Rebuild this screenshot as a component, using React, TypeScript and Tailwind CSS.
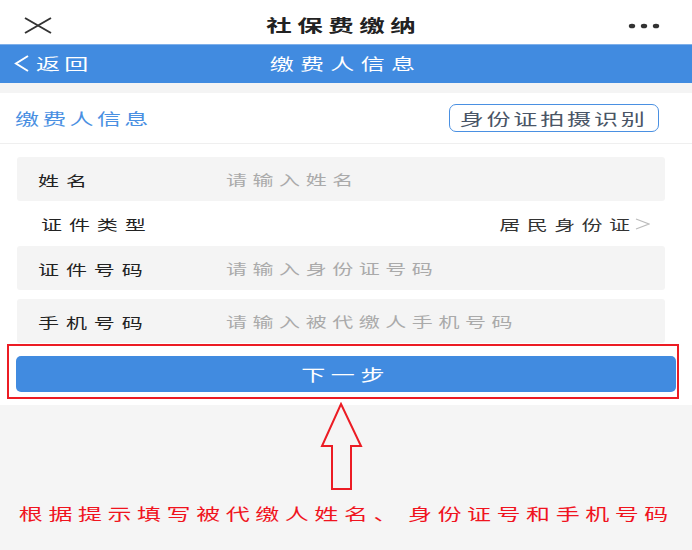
import type { ReactNode } from 'react';

// the screenshot is stretched sideways, so text is widened with scale-x
const Wide = ({ children, className = '' }: { children: ReactNode; className?: string }) => (
  <span className={`inline-block scale-x-[1.5] leading-none whitespace-nowrap ${className}`}>{children}</span>
);

const CloseIcon = () => (
  <svg width="28" height="17" viewBox="0 0 28 17" fill="none">
    <path d="M1 1 L27 16 M27 1 L1 16" stroke="#333" strokeWidth="2" />
  </svg>
);

const MoreIcon = () => (
  <svg width="32" height="6" viewBox="0 0 32 6">
    <ellipse cx="4" cy="3" rx="3.2" ry="2.3" fill="#333" />
    <ellipse cx="16" cy="3" rx="3.2" ry="2.3" fill="#333" />
    <ellipse cx="28" cy="3" rx="3.2" ry="2.3" fill="#333" />
  </svg>
);

const BackIcon = () => (
  <svg width="16" height="17" viewBox="0 0 16 17" fill="none">
    <polyline points="14,1 2,8.5 14,16" stroke="#fff" strokeWidth="2" />
  </svg>
);

const ChevronRight = () => (
  <svg width="16" height="12" viewBox="0 0 16 12" fill="none">
    <polyline points="2,1 15,6 2,11" stroke="#bbb" strokeWidth="1.3" />
  </svg>
);

const UpArrow = () => (
  <svg width="44" height="90" viewBox="0 0 44 90" fill="none">
    <polygon
      points="21,2 41,44 31,44 31,87 12,87 12,44 2,44"
      stroke="#ec1c24"
      strokeWidth="2"
      strokeLinejoin="miter"
    />
  </svg>
);

const InputRow = ({ label, placeholder }: { label: string; placeholder: string }) => (
  <div className="flex h-11 items-center rounded-[3px] bg-[#f4f4f4] pl-[21px]">
    <div className="w-[188px]">
      <Wide className="origin-left text-[14px] tracking-[4.6px] text-[#222]">{label}</Wide>
    </div>
    <Wide className="origin-left text-[14px] tracking-[3.7px] text-[#aaa]">{placeholder}</Wide>
  </div>
);

export default function App() {
  return (
    <div className="min-h-[550px] w-[692px] overflow-hidden bg-[#f5f5f5] font-['Noto_Sans_CJK_SC','Liberation_Sans',sans-serif]">
      {/* top bar */}
      <div className="flex h-11 items-center bg-white pt-[6px]">
        <div className="w-[140px] pl-[24px]">
          <CloseIcon />
        </div>
        <div className="flex-1 pr-[4px] text-center">
          <Wide className="text-[17px] font-bold tracking-[3.7px] text-[#222]">社保费缴纳</Wide>
        </div>
        <div className="flex w-[140px] justify-end pr-[32px] pt-[2px]">
          <MoreIcon />
        </div>
      </div>

      {/* blue header */}
      <div className="flex h-[39px] items-center border-t border-[#7fb0ea] bg-[#418be0] pb-[2px]">
        <div className="flex w-[140px] items-center pl-[14px]">
          <BackIcon />
          <span className="ml-[6px]">
            <Wide className="origin-left text-[16px] tracking-[2.9px] text-white">返回</Wide>
          </span>
        </div>
        <div className="flex-1 text-center">
          <Wide className="text-[16px] tracking-[4.2px] text-white">缴费人信息</Wide>
        </div>
        <div className="w-[140px]" />
      </div>

      <div className="h-[10px] bg-[#f4f4f4]" />

      {/* section title */}
      <div className="flex h-[51px] items-center justify-between border-b border-[#efefef] bg-white pl-[15px] pr-[33px]">
        <Wide className="origin-left text-[16px] tracking-[2.2px] text-[#4a90e2]">缴费人信息</Wide>
        <button className="flex h-[28px] w-[210px] items-center justify-center rounded-[7px] border border-[#4a90e2] bg-white">
          <Wide className="text-[16px] tracking-[1.9px] text-[#4a5566]">身份证拍摄识别</Wide>
        </button>
      </div>

      {/* form */}
      <div className="bg-white">
        <div className="flex flex-col pl-[17px] pr-[27px] pt-[13px]">
          <InputRow label="姓名" placeholder="请输入姓名" />
          <div className="flex h-[45px] items-center justify-between pl-[24px]">
            <Wide className="origin-left text-[14px] tracking-[4.6px] text-[#222]">证件类型</Wide>
            <div className="flex items-center">
              <Wide className="origin-right text-[14px] tracking-[4.3px] text-[#333]">居民身份证</Wide>
              <span className="-ml-[2px] mr-[15px]">
                <ChevronRight />
              </span>
            </div>
          </div>
          <InputRow label="证件号码" placeholder="请输入身份证号码" />
          <div className="mt-[9px]">
            <InputRow label="手机号码" placeholder="请输入被代缴人手机号码" />
          </div>
        </div>

        <div className="relative px-4 pb-[13px] pt-[13px]">
          <button className="flex h-9 w-full items-center justify-center rounded-[5px] bg-[#418be0]">
            <Wide className="text-[16px] tracking-[3.8px] text-white">下一步</Wide>
          </button>
          <div className="absolute left-[7px] top-[1px] h-[55px] w-[672px] border-2 border-[#ec1c24]" />
        </div>
      </div>

      {/* hint */}
      <div className="relative h-[145px]">
        <div className="absolute left-[320px] top-[-3px]">
          <UpArrow />
        </div>
        <div className="pt-[96px] text-center">
          <Wide className="text-[16px] tracking-[3.7px] text-[#f0141e] [word-spacing:-4px]">根据提示填写被代缴人姓名、 身份证号和手机号码</Wide>
        </div>
      </div>
    </div>
  );
}
